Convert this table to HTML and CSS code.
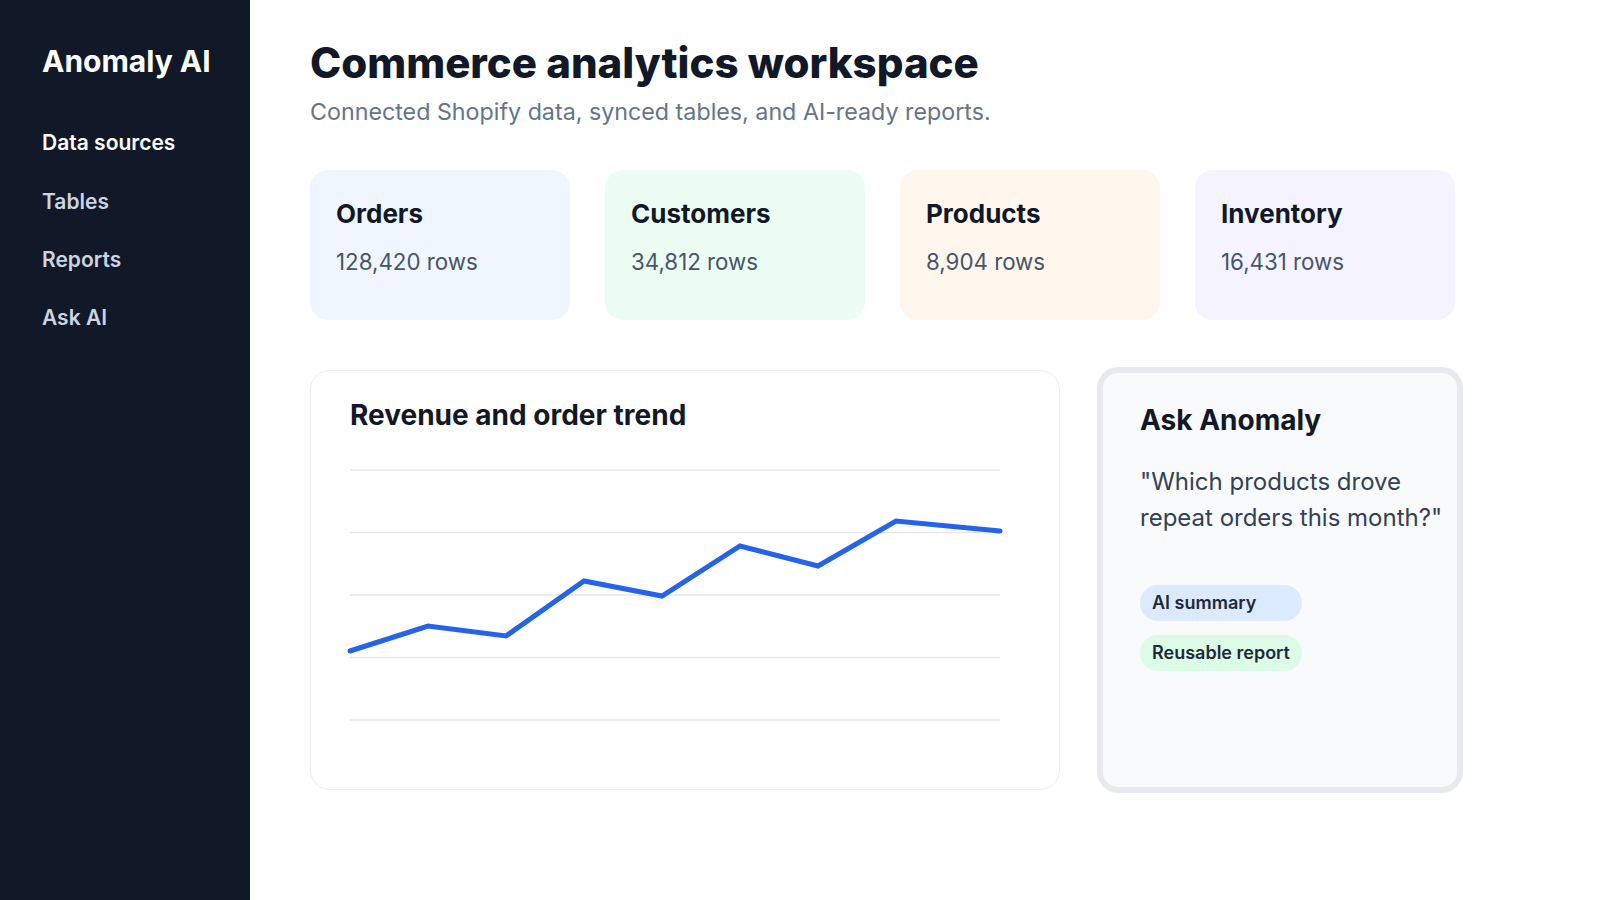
FILE: index.html
```html
<!DOCTYPE html>
<html lang="en">
<head>
<meta charset="utf-8">
<title>Anomaly AI — Commerce analytics workspace</title>
<link rel="stylesheet" href="styles.css">
</head>
<body>
<div class="app">
  <aside class="sidebar">
    <div class="brand">Anomaly AI</div>
    <nav class="nav">
      <a class="nav-item active" href="#">Data sources</a>
      <a class="nav-item" href="#">Tables</a>
      <a class="nav-item" href="#">Reports</a>
      <a class="nav-item" href="#">Ask AI</a>
    </nav>
  </aside>
  <main class="main">
    <h1 class="title">Commerce analytics workspace</h1>
    <p class="subtitle">Connected Shopify data, synced tables, and AI-ready reports.</p>

    <section class="stats">
      <div class="stat stat-blue">
        <div class="stat-label">Orders</div>
        <div class="stat-value">128,420 rows</div>
      </div>
      <div class="stat stat-green">
        <div class="stat-label">Customers</div>
        <div class="stat-value">34,812 rows</div>
      </div>
      <div class="stat stat-orange">
        <div class="stat-label">Products</div>
        <div class="stat-value">8,904 rows</div>
      </div>
      <div class="stat stat-violet">
        <div class="stat-label">Inventory</div>
        <div class="stat-value">16,431 rows</div>
      </div>
    </section>

    <section class="lower">
      <div class="chart-card">
        <h2 class="card-title">Revenue and order trend</h2>
        <svg class="chart" width="650" height="280" viewBox="0 0 650 280">
          <g class="grid">
            <line x1="0" y1="8" x2="650" y2="8"/>
            <line x1="0" y1="70.5" x2="650" y2="70.5"/>
            <line x1="0" y1="133" x2="650" y2="133"/>
            <line x1="0" y1="195.5" x2="650" y2="195.5"/>
            <line x1="0" y1="258" x2="650" y2="258"/>
          </g>
          <polyline class="trend" points="0,189 78,164 156,174 234,119 312,134 390,84 468,104 546,59 650,69"/>
        </svg>
      </div>
      <div class="ask-card">
        <h2 class="card-title">Ask Anomaly</h2>
        <p class="quote">"Which products drove repeat orders this month?"</p>
        <div class="pills">
          <span class="pill pill-blue">AI summary</span>
          <span class="pill pill-green">Reusable report</span>
        </div>
      </div>
    </section>
  </main>
</div>
</body>
</html>
```

FILE: styles.css
```css
* {
  box-sizing: border-box;
}

html, body {
  margin: 0;
  padding: 0;
  background: #ffffff;
}

body {
  font-family: Inter, "Noto Sans", "Liberation Sans", sans-serif;
  color: #111827;
}

.app {
  display: flex;
  min-height: 100vh;
}

/* Sidebar */
.sidebar {
  width: 250px;
  flex: 0 0 250px;
  min-height: 100vh;
  background: #111827;
  padding: 43px 30px 40px 42px;
}

.brand {
  font-size: 30px;
  font-weight: 700;
  line-height: 36px;
  color: #ffffff;
}

.nav {
  display: flex;
  flex-direction: column;
  margin-top: 35px;
}

.nav-item {
  display: block;
  font-size: 21px;
  font-weight: 600;
  line-height: 28px;
  padding: 15.2px 0;
  color: #cbd5e1;
  text-decoration: none;
}

.nav-item.active {
  color: #ffffff;
}

/* Main */
.main {
  flex: 1;
  padding: 38px 60px 40px 60px;
}

.title {
  margin: 0;
  font-size: 42px;
  font-weight: 800;
  line-height: 50px;
  color: #111827;
}

.subtitle {
  margin: 10px 0 0 0;
  font-size: 23.25px;
  line-height: 28px;
  color: #64748b;
}

/* Stat cards */
.stats {
  display: grid;
  grid-template-columns: repeat(4, 260px);
  gap: 35px;
  margin-top: 44px;
}

.stat {
  height: 150px;
  border-radius: 18px;
  padding: 28px 26px;
}

.stat-blue { background: #eff6ff; }
.stat-green { background: #ecfdf3; }
.stat-orange { background: #fff7ed; }
.stat-violet { background: #f5f3ff; }

.stat-label {
  font-size: 26px;
  font-weight: 700;
  line-height: 31px;
  color: #111827;
}

.stat-value {
  margin-top: 19px;
  font-size: 22.3px;
  line-height: 27px;
  color: #475569;
}

/* Lower row */
.lower {
  display: grid;
  grid-template-columns: 750px 360px;
  gap: 40px;
  margin-top: 50px;
}

.card-title {
  margin: 0;
  font-size: 28px;
  font-weight: 700;
  line-height: 34px;
  color: #111827;
}

.chart-card {
  border: 1px solid #eceef2;
  border-radius: 20px;
  padding: 27px 40px 47px 39px;
  background: #ffffff;
}

.chart {
  display: block;
  margin-top: 30px;
  overflow: visible;
}

.grid line {
  stroke: #e5e7eb;
  stroke-width: 1.5;
}

.trend {
  fill: none;
  stroke: #2563eb;
  stroke-width: 5;
  stroke-linecap: round;
  stroke-linejoin: miter;
}

.ask-card {
  background: #f8fafc;
  border: 3px solid #e8e9ee;
  box-shadow: 0 0 0 3px #e8e9ee;
  border-radius: 18px;
  padding: 30px 10px 30px 37px;
}

.quote {
  margin: 27px 0 0 0;
  font-size: 24px;
  line-height: 36px;
  color: #334155;
}

.pills {
  display: inline-flex;
  flex-direction: column;
  gap: 14px;
  margin-top: 49px;
}

.pill {
  display: block;
  height: 36px;
  line-height: 36px;
  padding: 0 12px;
  border-radius: 999px;
  font-size: 18px;
  font-weight: 600;
  color: #1e293b;
}

.pill-blue { background: #dbeafe; }
.pill-green { background: #dcfce7; }
```
